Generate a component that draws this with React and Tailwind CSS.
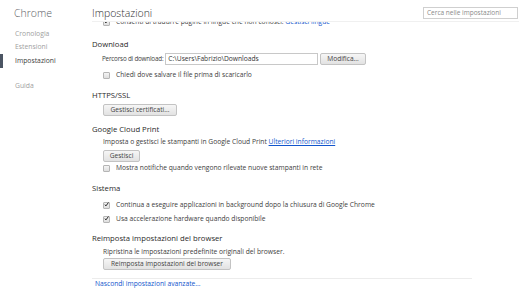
import React from 'react';

const Checkbox = ({ checked }) => (
  <span className="inline-flex items-center justify-center w-[7px] h-[7px] border border-[#b5b5b5] rounded-[1px] bg-gradient-to-b from-[#f4f4f4] to-[#dedede] mr-[6px] shrink-0">
    {checked && (
      <svg width="7" height="7" viewBox="0 0 7 7" className="-mt-[1px]">
        <path d="M1 3.6 L2.8 5.4 L6.2 0.8" fill="none" stroke="#222" strokeWidth="1.4" />
      </svg>
    )}
  </span>
);

const Button = ({ children, className = '' }) => (
  <button className={`h-[12px] px-[4px] border border-[#c3c3c3] rounded-[2px] bg-gradient-to-b from-[#f6f6f6] to-[#e2e2e2] text-[6.6px] text-[#444] leading-none whitespace-nowrap shrink-0 ${className}`}>
    {children}
  </button>
);

const Title = ({ children, className = '' }) => (
  <div className={`h-[12px] flex items-center text-[7.7px] text-[#2a2a2a] ${className}`}>{children}</div>
);

const Row = ({ children, className = '' }) => (
  <div className={`h-[12px] flex items-center pl-[11px] text-[6.7px] text-[#404040] whitespace-nowrap ${className}`}>{children}</div>
);

export default function App() {
  return (
    <div className="w-[519px] h-[292px] overflow-hidden bg-white flex" style={{ fontFamily: '"Open Sans", sans-serif' }}>
      <nav className="w-[92px] shrink-0 relative">
        <div className="pl-[14px] pt-[6px] h-[22px] text-[10.5px] text-[#5c6166] font-light">Chrome</div>
        <div className="mt-[6px] pl-[15px] text-[6.8px] text-[#a0a0a0] h-[13px] flex items-center">Cronologia</div>
        <div className="pl-[15px] text-[6.8px] text-[#a0a0a0] h-[13px] flex items-center">Estensioni</div>
        <div className="pl-[15px] text-[6.8px] text-[#404040] h-[14px] flex items-center relative">
          <span className="absolute left-0 top-0 w-[3px] h-[14px] bg-[#4b5563]" />
          Impostazioni
        </div>
        <div className="mt-[12px] pl-[15px] text-[6.8px] text-[#a0a0a0] h-[13px] flex items-center">Guida</div>
      </nav>
      <main className="flex-1 flex flex-col">
        <header className="h-[22px] flex items-start justify-between border-b border-[#f0f0f0] relative z-10 bg-white">
          <div className="pt-[6px] text-[10.5px] text-[#303030] font-light">Impostazioni</div>
          <div className="mt-[7px] mr-[1px] w-[95px] h-[12px] border border-[#cfcfcf] flex items-center px-[3px] text-[6.5px] text-[#8a8a8a]">
            Cerca nelle impostazioni
          </div>
        </header>
        <div className="h-[6px] overflow-hidden flex items-end">
          <div className="h-[12px] flex items-center pl-[11px] text-[6.7px] text-[#404040] whitespace-nowrap">
            <Checkbox checked />
            Consenti di tradurre pagine in lingue che non conosci.&nbsp;<span className="text-[#1155cc]">Gestisci lingue</span>
          </div>
        </div>

        <Title className="mt-[11px]">Download</Title>
        <div className="mt-[2px] w-[274px] h-[12px] flex items-center pl-[10px] text-[#404040] whitespace-nowrap">
          <span className="shrink-0 text-[6.3px] tracking-[-0.2px]">Percorso di download:</span>
          <span className="ml-[2px] flex-1 h-[12px] border border-[#c8c8c8] flex items-center px-[2px] text-[6.7px] text-[#333]">
            C:\Users\Fabrizio\Downloads
          </span>
          <Button className="ml-[2px] w-[46px]">Modifica...</Button>
        </div>
        <Row className="mt-[4px]">
          <Checkbox />
          Chiedi dove salvare il file prima di scaricarlo
        </Row>

        <Title className="mt-[9px]">HTTPS/SSL</Title>
        <Row className="mt-[2px]">
          <Button className="w-[74px]">Gestisci certificati...</Button>
        </Row>

        <Title className="mt-[8px]">Google Cloud Print</Title>
        <Row>
          Imposta o gestisci le stampanti in Google Cloud Print&nbsp;
          <span className="text-[#1155cc] underline">Ulteriori informazioni</span>
        </Row>
        <Row className="mt-[2px] h-[11px]">
          <Button className="h-[11px] w-[37px]">Gestisci</Button>
        </Row>
        <Row>
          <Checkbox />
          Mostra notifiche quando vengono rilevate nuove stampanti in rete
        </Row>

        <Title className="mt-[9px]">Sistema</Title>
        <Row className="mt-[4px]">
          <Checkbox checked />
          Continua a eseguire applicazioni in background dopo la chiusura di Google Chrome
        </Row>
        <Row className="mt-[2px]">
          <Checkbox checked />
          Usa accelerazione hardware quando disponibile
        </Row>

        <Title className="mt-[8px]">Reimposta impostazioni del browser</Title>
        <Row className="mt-[1px]">Ripristina le impostazioni predefinite originali del browser.</Row>
        <Row>
          <Button className="w-[128px]">Reimposta impostazioni del browser</Button>
        </Row>

        <div className="mt-[8px] mr-[47px] border-t border-[#ececec] h-[12px] flex items-center pl-[3px] text-[6.7px] text-[#1155cc]">
          Nascondi impostazioni avanzate...
        </div>
      </main>
    </div>
  );
}
